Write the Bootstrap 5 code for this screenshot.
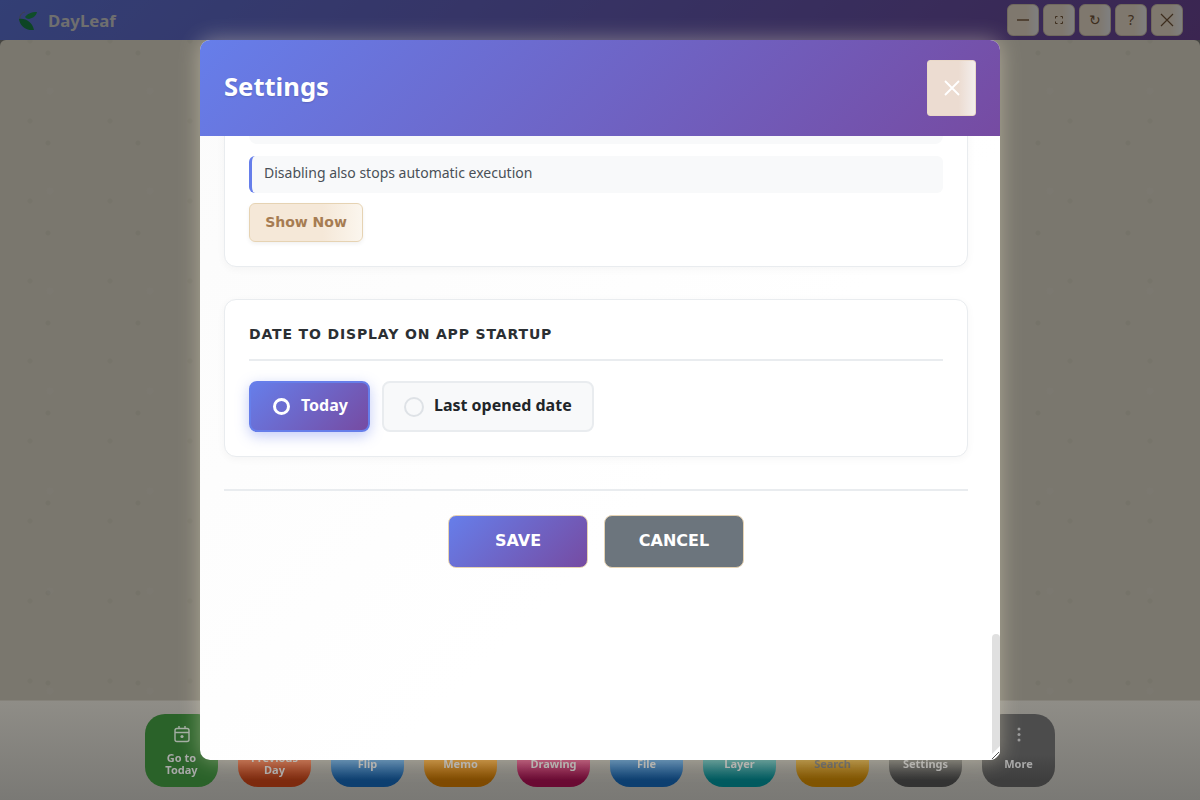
<!DOCTYPE html>
<html lang="en">
<head>
    <meta charset="UTF-8">
    <meta name="viewport" content="width=device-width, initial-scale=1.0">
    <title>DayLeaf</title>
    <link href="https://cdn.jsdelivr.net/npm/bootstrap@5.3.0/dist/css/bootstrap.min.css" rel="stylesheet">
    <style>
        html, body { height: 100%; overflow: hidden; }
        body { font-family: "Noto Sans", sans-serif; color: #212529; background: #8b8a85; }
        .app-shell { position: relative; width: 1200px; height: 800px; }

        /* app behind the dialog */
        .top-bar { height: 40px; padding: 4px 17px 4px 18px; background: linear-gradient(135deg, #667eea, #764ba2); }
        .brand-name { font: 700 16.8px "Noto Sans", sans-serif; color: #dedede; margin-left: 10px; }
        .win-btn { width: 32px; height: 32px; border-radius: 6px; border: 1px solid #e0d2bd; background: linear-gradient(90deg, #fff0dc 60%, #fff 100%); color: #7a5a3a; font-size: 14px; line-height: 1; }
        .win-btn svg { width: 18px; height: 18px; }
        .paper { height: 660px; border-radius: 6px 6px 0 0; background-color: #f5efdc;
            background-image: radial-gradient(circle, rgba(0,0,0,.04) 2px, transparent 3px), radial-gradient(circle, rgba(255,255,255,.14) 3px, transparent 4px), radial-gradient(circle, rgba(0,0,0,.03) 2px, transparent 3px);
            background-size: 90px 90px, 100px 100px, 80px 80px;
            background-position: 3px -32px, 0 1px, -10px 41px; }
        .backdrop-layer { position: absolute; inset: 0; background: rgba(0,0,0,.5); }

        /* toolbar sits over the backdrop, it keeps its own muted colours */
        .tool-bar { position: absolute; left: 0; right: 0; bottom: 0; height: 100px; padding-top: 13px; gap: 20px; background: linear-gradient(180deg, #8f8d87, #7a7975); border-top: 1px solid #85827a; }
        .tool-btn { width: 73px; height: 73px; border-radius: 20px; padding-top: 11px; color: #a8a8a8; font: 700 11px/12px "Noto Sans", sans-serif; filter: blur(.6px); }
        .tool-icon { width: 20px; height: 20px; margin-bottom: 2px; }
        .tool-label { height: 26px; margin-top: 4px; }
        .tb-green { background: #2a6229; }
        .tb-red { background: linear-gradient(180deg, #bd5c3c 55%, #7d2a0e 90%); }
        .tb-blue { background: linear-gradient(180deg, #4c82b2 55%, #0d3f70 90%); }
        .tb-orange { background: linear-gradient(180deg, #c08228 55%, #7f4a00 90%); }
        .tb-pink { background: linear-gradient(180deg, #b4446e 55%, #6a0a33 90%); }
        .tb-azure { background: linear-gradient(180deg, #4c82b2 55%, #0d3f70 90%); }
        .tb-teal { background: linear-gradient(180deg, #50908f 55%, #005a5f 90%); }
        .tb-yellow { background: linear-gradient(180deg, #a98430 55%, #805400 90%); color: #555; }
        .tb-gray { background: linear-gradient(180deg, #6c6c68 55%, #333 90%); }
        .tb-dark { background: linear-gradient(180deg, #4c4c4c 55%, #3e3e3e 90%); }

        /* settings dialog */
        .settings-dialog { position: absolute; left: 200px; top: 40px; width: 800px; height: 720px; border-radius: 10px; overflow: hidden; background: linear-gradient(135deg, #fbfbfb, #fff 60%, #fff); box-shadow: 0 0 22px rgba(255,245,215,.4); }
        .settings-head { height: 96px; padding: 0 24px; background: linear-gradient(135deg, #667eea, #764ba2); color: #fff; }
        .settings-head h2 { font: 700 25.6px "Noto Sans", sans-serif; margin: 0; padding-bottom: 4px; text-shadow: 0 1px 2px rgba(0,0,0,.15); }
        .head-close { width: 49px; height: 56px; border: 1px solid #ead9c8; border-radius: 3px; background: linear-gradient(90deg, #ecdcd1 65%, #f3eeec 100%); color: #fff; }
        .settings-scroll { height: 624px; overflow: hidden; padding: 0 32px 192px 24px; }
        .scroll-thumb { position: absolute; right: 0; bottom: 0; width: 8px; height: 126px; background: #e0e0e0; border-radius: 4px 4px 0 0; }
        .resize-mark { position: absolute; right: 0; bottom: 0; width: 14px; height: 14px; }

        .set-card { border: 1px solid #e9ecef; border-radius: 12px; background: #fff; padding: 24px; box-shadow: 0 2px 8px rgba(0,0,0,.04); margin-bottom: 32px; }
        .set-card-long { height: 2522px; justify-content: flex-end; }
        .prev-strip { height: 30px; margin-bottom: 12px; background: #f8f9fa; border-radius: 8px; }
        .hint-note { background: #f8f9fa; border-left: 3px solid #667eea; border-radius: 6px; padding: 6px 12px 10px; font-size: 14px; line-height: 21px; color: #495057; margin-bottom: 10px; }
        .show-now { width: 114px; height: 39px; padding: 0 0 2px; border: 1px solid #e6d3b3; border-radius: 6px; background: linear-gradient(90deg, #f5e8d8 65%, #fbf6ee 100%); color: #a67c52; font: 700 14px "DejaVu Sans", sans-serif; box-shadow: 0 2px 4px rgba(0,0,0,.06); }
        .set-title { padding-top: 1px; font: 700 14px/19.400px "DejaVu Sans", sans-serif; letter-spacing: .85px; color: #2b2f33; text-transform: uppercase; padding-bottom: 15px; margin-bottom: 20px; border-bottom: 2px solid #e9ecef; }
        .start-opt { height: 51px; padding: 0 20px 3px; border: 2px solid #e9ecef; border-radius: 8px; background: #f8f9fa; font: 700 16px "Noto Sans", sans-serif; gap: 10px; }
        .start-opt.is-on { padding: 0 20px 3px 22px; gap: 11px; border-color: #667eea; color: #fff; background: linear-gradient(135deg, #667eea, #764ba2); box-shadow: 0 4px 14px rgba(102,126,234,.4); }
        .opt-gap { gap: 12px; }
        .opt-dot { width: 20px; height: 20px; margin-top: 3px; border-radius: 50%; border: 2px solid #dee2e6; background: #f8f9fa; }
        .is-on .opt-dot { width: 17px; height: 17px; border: 3px solid #fff; background: transparent; }
        .foot-row { border-top: 2px solid #e9ecef; padding-top: 24px; gap: 16px; }
        .foot-btn { width: 140px; height: 53px; padding: 0 0 2px; border: 1px solid #e6d3b3; border-radius: 8px; color: #fff; font: 700 16px "DejaVu Sans", sans-serif; }
        .foot-save { background: linear-gradient(135deg, #667eea, #764ba2); }
        .foot-cancel { background: #6c757d; }
    </style>
</head>
<body>
<div class="app-shell">
    <header class="top-bar d-flex align-items-center">
        <svg width="20" height="20" viewBox="0 0 20 20">
            <path d="M7 2C3 3 1 6 2 11" fill="none" stroke="#7d8296" stroke-width="1"/>
            <path d="M7 7c2-3 6-5 12-5-1 4-4 6-8 7-2 0-3-1-4-2z" fill="#1f9a55"/>
            <path d="M1 9c7-1 13 3 15 11C9 21 2 17 1 9z" fill="#1a8a4a"/>
        </svg>
        <span class="brand-name">DayLeaf</span>
        <div class="d-flex ms-auto gap-1">
            <button class="win-btn d-flex align-items-center justify-content-center p-0" aria-label="Minimize"><svg viewBox="0 0 18 18"><path d="M3 9h12" stroke="#7a5a3a" stroke-width="1.4"/></svg></button>
            <button class="win-btn d-flex align-items-center justify-content-center p-0" aria-label="Fullscreen"><svg viewBox="0 0 18 18"><path d="M5.500 7.500v-2h2M10.500 5.500h2v2M12.500 10.500v2h-2M7.500 12.500h-2v-2" fill="none" stroke="#7a5a3a"/></svg></button>
            <button class="win-btn d-flex align-items-center justify-content-center p-0">↻</button>
            <button class="win-btn d-flex align-items-center justify-content-center p-0">?</button>
            <button class="win-btn d-flex align-items-center justify-content-center p-0" aria-label="Close"><svg viewBox="0 0 18 18"><path d="M3 3l12 12M15 3L3 15" stroke="#7a5a3a" stroke-width="1.2"/></svg></button>
        </div>
    </header>
    <main class="paper"></main>
    <div class="backdrop-layer"></div>

    <nav class="tool-bar d-flex justify-content-center">
        <div class="tool-btn tb-green d-flex flex-column align-items-center text-center">
            <svg class="tool-icon" viewBox="0 0 20 20" fill="none" stroke="#a3ada3" stroke-width="1.400"><rect x="3" y="3.500" width="14" height="13" rx="2"/><path d="M3 7.500h14M7 1v3M13 1v3"/><circle cx="10" cy="11.500" r="1.600" fill="#a3ada3" stroke="none"/></svg>
            <span class="tool-label d-flex align-items-center">Go to<br>Today</span>
        </div>
        <div class="tool-btn tb-red d-flex flex-column align-items-center text-center"><span class="tool-icon"></span><span class="tool-label d-flex align-items-center">Previous<br>Day</span></div>
        <div class="tool-btn tb-blue d-flex flex-column align-items-center text-center"><span class="tool-icon"></span><span class="tool-label d-flex align-items-center">Flip</span></div>
        <div class="tool-btn tb-orange d-flex flex-column align-items-center text-center"><span class="tool-icon"></span><span class="tool-label d-flex align-items-center">Memo</span></div>
        <div class="tool-btn tb-pink d-flex flex-column align-items-center text-center"><span class="tool-icon"></span><span class="tool-label d-flex align-items-center">Drawing</span></div>
        <div class="tool-btn tb-azure d-flex flex-column align-items-center text-center"><span class="tool-icon"></span><span class="tool-label d-flex align-items-center">File</span></div>
        <div class="tool-btn tb-teal d-flex flex-column align-items-center text-center"><span class="tool-icon"></span><span class="tool-label d-flex align-items-center">Layer</span></div>
        <div class="tool-btn tb-yellow d-flex flex-column align-items-center text-center"><span class="tool-icon"></span><span class="tool-label d-flex align-items-center">Search</span></div>
        <div class="tool-btn tb-gray d-flex flex-column align-items-center text-center"><span class="tool-icon"></span><span class="tool-label d-flex align-items-center">Settings</span></div>
        <div class="tool-btn tb-dark d-flex flex-column align-items-center text-center">
            <svg class="tool-icon" viewBox="0 0 20 20" fill="#9a9a9a"><circle cx="10" cy="4" r="1.500"/><circle cx="10" cy="9.500" r="1.500"/><circle cx="10" cy="15" r="1.500"/></svg>
            <span class="tool-label d-flex align-items-center">More</span>
        </div>
    </nav>

    <section class="settings-dialog">
        <div class="settings-head d-flex align-items-center justify-content-between">
            <h2>Settings</h2>
            <button class="head-close d-flex align-items-center justify-content-center p-0" aria-label="Close">
                <svg width="16" height="16" viewBox="0 0 16 16"><path d="M1 1l14 14M15 1L1 15" stroke="#fff" stroke-width="1.800"/></svg>
            </button>
        </div>
        <div class="settings-scroll" id="settingsScroll">
            <div class="set-card set-card-long d-flex flex-column">
                <div class="prev-strip"></div>
                <div class="hint-note">Disabling also stops automatic execution</div>
                <div><button class="show-now">Show Now</button></div>
            </div>
            <div class="set-card">
                <div class="set-title">Date to display on app startup</div>
                <div class="d-flex opt-gap">
                    <div class="start-opt is-on d-flex align-items-center"><span class="opt-dot"></span>Today</div>
                    <div class="start-opt d-flex align-items-center"><span class="opt-dot"></span>Last opened date</div>
                </div>
            </div>
            <div class="foot-row d-flex justify-content-center">
                <button class="foot-btn foot-save">SAVE</button>
                <button class="foot-btn foot-cancel">CANCEL</button>
            </div>
        </div>
        <div class="scroll-thumb"></div>
        <svg class="resize-mark" viewBox="0 0 14 14"><path d="M14 0L0 14h14z" fill="#fff"/><path d="M13 6l-7 7M13 9l-4 4M13 12l-1 1" stroke="#555" stroke-width="1"/></svg>
    </section>
</div>
<script src="https://cdn.jsdelivr.net/npm/bootstrap@5.3.0/dist/js/bootstrap.bundle.min.js"></script>
<script>
    // the dialog is shown scrolled to its end
    const scrollBox = document.getElementById('settingsScroll');
    scrollBox.scrollTop = scrollBox.scrollHeight;
</script>
</body>
</html>
